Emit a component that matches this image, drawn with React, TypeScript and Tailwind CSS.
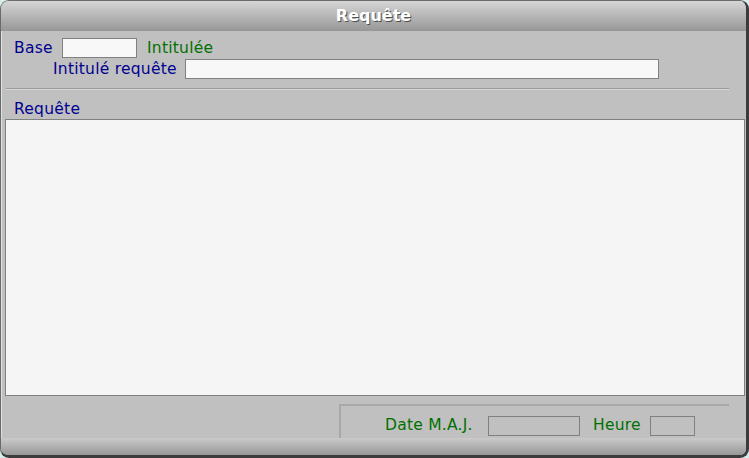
import React from 'react'

const font = { fontFamily: '"DejaVu Sans", Verdana, sans-serif' }

function Field({ w, dim = false }: { w: string; dim?: boolean }) {
  return (
    <div
      className={`${w} h-[20px] shrink-0 border border-[#808080] ${dim ? 'bg-[#c0c0c0]' : 'bg-[#f8f8f8]'}`}
    />
  )
}

export default function App() {
  return (
    <div className="w-[749px] h-[458px] bg-[#d8ecec] text-[15.5px] leading-none tracking-[0.25px]" style={font}>
      <div className="w-full h-full flex flex-col rounded-[9px] overflow-hidden border-l border-t border-[#6a6a6a] border-r-[3px] border-b-[3px] border-r-[#3c3c3c] border-b-[#3c3c3c] bg-[#c0c0c0]">
        {/* Title bar */}
        <div className="h-[30px] shrink-0 flex items-center justify-center bg-gradient-to-b from-[#d6d6d6] to-[#979797]">
          <span className="text-white font-bold text-[16px] tracking-normal [text-shadow:1px_1px_0_#505050]">
            Requête
          </span>
        </div>

        {/* Body */}
        <div className="flex-1 flex flex-col border-l border-[#e0e0e0]">
          <div className="flex items-center h-[20px] mt-[7px]">
            <span className="ml-[12px] text-[#000090] w-[48px] translate-y-[1px]">Base</span>
            <Field w="w-[75px]" />
            <span className="ml-[10px] text-[#007000] translate-y-[1px]">Intitulée</span>
          </div>
          <div className="flex items-center h-[20px] mt-[1px]">
            <span className="ml-[51px] text-[#000090] w-[132px] whitespace-nowrap translate-y-[1px]">Intitulé requête</span>
            <Field w="w-[474px]" />
          </div>

          <div className="ml-[4px] w-[723px] mt-[9px] h-[2px] border-t border-[#9a9a9a] border-b border-b-[#d8d8d8]" />

          <div className="h-[29px] flex items-center pt-[10px]">
            <span className="ml-[12px] text-[#000090]">Requête</span>
          </div>

          <div className="ml-[3px] w-[740px] h-[277px] border border-[#808080] bg-[#f5f5f5]" />

          <div className="flex-1 flex justify-start">
            <div className="ml-[337px] mt-[8px] w-[390px] border-t-2 border-l-2 border-t-[#a8a8a8] border-l-[#a8a8a8] flex items-center pt-[8px]">
              <div className="ml-[44px] w-[103px] text-[#007000] whitespace-nowrap">Date M.A.J.</div>
              <Field w="w-[92px]" dim />
              <div className="ml-[13px] w-[57px] text-[#007000]">Heure</div>
              <Field w="w-[45px]" dim />
            </div>
          </div>
        </div>

        {/* Bottom bar */}
        <div className="h-[17px] shrink-0 bg-gradient-to-b from-[#cbcbcb] to-[#979797]" />
      </div>
    </div>
  )
}
